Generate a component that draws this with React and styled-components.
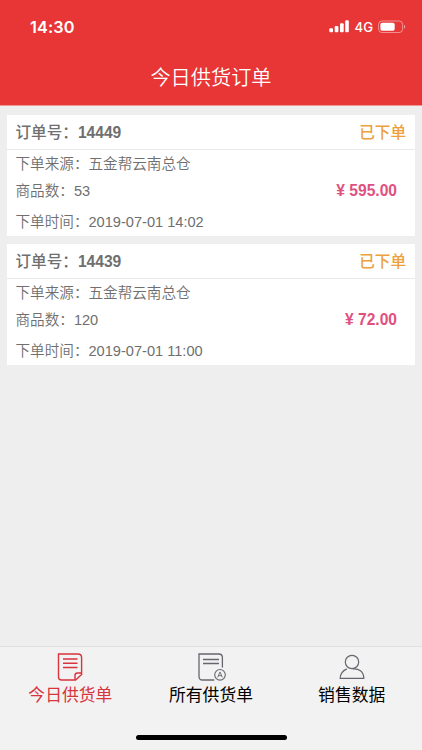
import React from "react";
import styled, { createGlobalStyle } from "styled-components";

const GlobalStyle = createGlobalStyle`
  * { box-sizing: border-box; }
  html, body { margin: 0; padding: 0; }
  body {
    font-family: "Liberation Sans", "Noto Sans CJK SC", sans-serif;
    -webkit-font-smoothing: antialiased;
  }
`;

const Screen = styled.div`
  display: flex;
  flex-direction: column;
  width: 422px;
  height: 750px;
  overflow: hidden;
  background: #eeeeee;
`;

const Header = styled.header`
  flex: none;
  height: 106px;
  background: #e83535;
  border-bottom: 1px solid #ee9797;
  color: #fff;
`;

const StatusBar = styled.div`
  display: flex;
  align-items: center;
  justify-content: space-between;
  height: 49px;
  padding: 4px 16px 0 30px;
`;

const Clock = styled.span`
  font: 600 16.3px/20px Inter, sans-serif;
  letter-spacing: 0.1px;
`;

const StatusIcons = styled.div`
  display: flex;
  align-items: center;
`;

const Network = styled.span`
  margin: 0 5px 0 5px;
  font: 500 13.2px/18px Inter, sans-serif;
`;

const Title = styled.h1`
  margin: 0;
  padding-top: 14px;
  font-size: 20.2px;
  font-weight: 350;
  line-height: 30px;
  text-align: center;
`;

const OrderList = styled.main`
  flex: 1;
  display: flex;
  flex-direction: column;
  gap: 8px;
  padding: 9px 7px 0;
`;

const Card = styled.article`
  height: 121px;
  background: #fff;
  color: #6f6f6f;
`;

const CardHead = styled.div`
  display: flex;
  justify-content: space-between;
  height: 35px;
  padding: 1px 9px 0 8.5px;
  border-bottom: 1px solid #e9e9e9;
  font-size: 15.6px;
  font-weight: 500;
  line-height: 34px;
`;

const OrderNumber = styled.b`
  font-weight: 700;
`;

const Status = styled.span`
  color: #eda03d;
`;

const CardBody = styled.div`
  padding: 0 18px 0 8.5px;
`;

const Row = styled.div`
  display: flex;
  justify-content: space-between;
  height: ${(p) => p.$height}px;
  font-size: 14.6px;
  font-weight: 350;
  line-height: ${(p) => p.$height}px;
  white-space: pre;
`;

const Price = styled.strong`
  color: #e0507f;
  font-size: 15.6px;
  font-weight: 700;
`;

const TabBar = styled.nav`
  flex: none;
  display: grid;
  grid-template-columns: repeat(3, 1fr);
  height: 89px;
  padding-top: 5px;
  border-top: 1px solid #dfdfdf;
  background: #f2f2f2;
`;

const Tab = styled.div`
  display: flex;
  flex-direction: column;
  align-items: center;
  color: ${(p) => (p.$active ? "#d8343d" : "#000")};
  font-size: 16.8px;
  font-weight: 400;
  line-height: 28px;

  svg {
    display: block;
    color: ${(p) => (p.$active ? "#d8343d" : "#66666e")};
  }
`;

const HomeArea = styled.div`
  flex: none;
  display: flex;
  justify-content: center;
  height: 15px;
  background: #f2f2f2;
`;

const HomeIndicator = styled.div`
  width: 151px;
  height: 5px;
  border-radius: 3px;
  background: #000;
`;

const SignalIcon = () => (
  <svg width="20" height="13" viewBox="0 0 20 13" fill="currentColor">
    <rect x="0.3" y="8.3" width="3.7" height="4" rx="1" />
    <rect x="5.7" y="6" width="3.7" height="6.3" rx="1" />
    <rect x="11" y="3.2" width="3.7" height="9.1" rx="1" />
    <rect x="16.2" y="0.3" width="3.6" height="12" rx="1" />
  </svg>
);

const BatteryIcon = () => (
  <svg width="28" height="14" viewBox="0 0 28 14">
    <rect x="0.6" y="1" width="24" height="11.5" rx="3.4" fill="none" stroke="#fff" strokeOpacity="0.45" />
    <rect x="2.4" y="2.7" width="14.3" height="8" rx="1.7" fill="#fff" />
    <path d="M26 4.8c1.7.5 1.7 3.4 0 3.9z" fill="#fff" fillOpacity="0.5" />
  </svg>
);

const TodayIcon = () => (
  <svg width="30" height="30" viewBox="0 0 30 30" fill="none" stroke="currentColor" strokeWidth="1.4">
    <path d="M3.5 2H23Q26.6 2 26.6 5.6V22.4L20.6 28H6.5Q3.5 28 3.5 25V2Z" />
    <path d="M26.3 21H22.5Q20 21 20 23.5V27.7" />
    <path d="M8 7H22.5M8 11.2H22.5M8 15.5H22.5" />
  </svg>
);

const AllIcon = () => (
  <svg width="30" height="30" viewBox="0 0 30 30" fill="none" stroke="currentColor" strokeWidth="1.3">
    <path d="M18.3 28H6.5Q3 28 3 24.5V2H22.8Q26.4 2 26.4 5.6V15.5" />
    <path d="M7 7.5H23M7 11.5H23" />
    <circle cx="24" cy="22.8" r="5.3" strokeWidth="1.1" />
    <path d="M21.7 25.4L24 19.9L26.3 25.4M22.5 23.6H25.5" strokeWidth="0.9" />
  </svg>
);

const PersonIcon = () => (
  <svg width="30" height="30" viewBox="0 0 30 30" fill="none" stroke="currentColor" strokeWidth="1.2">
    <circle cx="15" cy="10" r="6.7" />
    <path d="M9.8 16.9C5.7 18.8 3.2 22 3.2 26.3H26.8C26.8 19.5 21.5 16.2 15.8 16.9" />
  </svg>
);

const orders = [
  { id: "14449", count: "53", price: "595.00", time: "2019-07-01 14:02" },
  { id: "14439", count: "120", price: "72.00", time: "2019-07-01 11:00" },
];

const tabs = [
  { label: "今日供货单", Icon: TodayIcon, active: true },
  { label: "所有供货单", Icon: AllIcon },
  { label: "销售数据", Icon: PersonIcon },
];

const OrderCard = ({ order }) => (
  <Card>
    <CardHead>
      <span>
        订单号：<OrderNumber>{order.id}</OrderNumber>
      </span>
      <Status>已下单</Status>
    </CardHead>
    <CardBody>
      <Row $height={28}>下单来源：五金帮云南总仓</Row>
      <Row $height={26}>
        <span>商品数：{order.count}</span>
        <Price>¥ {order.price}</Price>
      </Row>
      <Row $height={36}>下单时间：{order.time}</Row>
    </CardBody>
  </Card>
);

export default function App() {
  return (
    <Screen>
      <GlobalStyle />
      <Header>
        <StatusBar>
          <Clock>14:30</Clock>
          <StatusIcons>
            <SignalIcon />
            <Network>4G</Network>
            <BatteryIcon />
          </StatusIcons>
        </StatusBar>
        <Title>今日供货订单</Title>
      </Header>
      <OrderList>
        {orders.map((order) => (
          <OrderCard key={order.id} order={order} />
        ))}
      </OrderList>
      <TabBar>
        {tabs.map(({ label, Icon, active }) => (
          <Tab key={label} $active={active}>
            <Icon />
            {label}
          </Tab>
        ))}
      </TabBar>
      <HomeArea>
        <HomeIndicator />
      </HomeArea>
    </Screen>
  );
}
